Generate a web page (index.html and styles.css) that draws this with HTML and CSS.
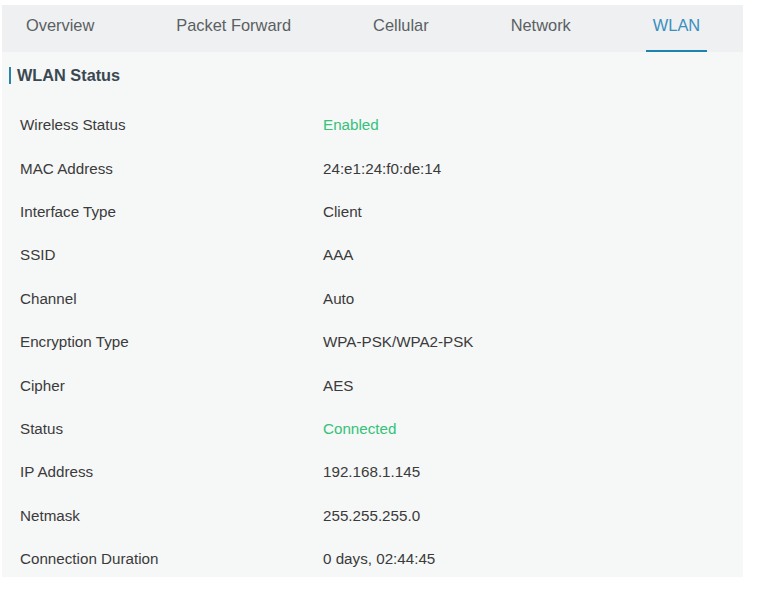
FILE: index.html
```html
<!DOCTYPE html>
<html>
<head>
<meta charset="utf-8">
<link rel="stylesheet" href="styles.css">
</head>
<body>
<div class="panel">
  <nav class="tabs">
    <div class="tab">Overview</div>
    <div class="tab">Packet Forward</div>
    <div class="tab">Cellular</div>
    <div class="tab">Network</div>
    <div class="tab active">WLAN</div>
  </nav>
  <div class="content">
    <h2 class="title">WLAN Status</h2>
    <div class="rows">
      <div class="row"><span class="label">Wireless Status</span><span class="value ok">Enabled</span></div>
      <div class="row"><span class="label">MAC Address</span><span class="value">24:e1:24:f0:de:14</span></div>
      <div class="row"><span class="label">Interface Type</span><span class="value">Client</span></div>
      <div class="row"><span class="label">SSID</span><span class="value">AAA</span></div>
      <div class="row"><span class="label">Channel</span><span class="value">Auto</span></div>
      <div class="row"><span class="label">Encryption Type</span><span class="value">WPA-PSK/WPA2-PSK</span></div>
      <div class="row"><span class="label">Cipher</span><span class="value">AES</span></div>
      <div class="row"><span class="label">Status</span><span class="value ok">Connected</span></div>
      <div class="row"><span class="label">IP Address</span><span class="value">192.168.1.145</span></div>
      <div class="row"><span class="label">Netmask</span><span class="value">255.255.255.0</span></div>
      <div class="row"><span class="label">Connection Duration</span><span class="value">0 days, 02:44:45</span></div>
    </div>
  </div>
</div>
</body>
</html>
```
FILE: styles.css
```css
html, body {
  margin: 0;
  padding: 0;
  background: #ffffff;
  font-family: "Liberation Sans", Arial, sans-serif;
}
body {
  padding: 5px 0 0 2px;
}
.panel {
  width: 741px;
  height: 572px;
  background: #f6f7f7;
  display: flex;
  flex-direction: column;
  overflow: hidden;
}
.tabs {
  height: 47px;
  flex: none;
  background: #eef0f1;
  display: flex;
  align-items: stretch;
  padding-left: 17px;
  gap: 68px;
  box-sizing: border-box;
}
.tab {
  padding: 0 7px 4px;
  font-size: 16.4px;
  color: #5a5f63;
  display: flex;
  align-items: center;
  border-bottom: 2px solid transparent;
  box-sizing: border-box;
}
.tab.active {
  color: #3a8fbf;
  border-bottom-color: #1f83b0;
}
.title {
  margin: 15px 0 0 7px;
  height: 17px;
  border-left: 2px solid #2a84a8;
  padding-left: 6px;
  font-size: 16.3px;
  font-weight: bold;
  color: #3a4852;
  line-height: 17px;
}
.rows {
  margin-top: 19px;
}
.row {
  height: 43.4px;
  display: flex;
  align-items: center;
  font-size: 15.2px;
  color: #3b3b3b;
}
.label {
  width: 303px;
  padding-left: 18px;
}
.value.ok {
  color: #35c27a;
}
```
